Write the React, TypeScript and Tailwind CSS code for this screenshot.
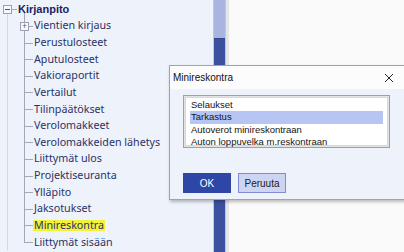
const children = [
  "Vientien kirjaus",
  "Perustulosteet",
  "Aputulosteet",
  "Vakioraportit",
  "Vertailut",
  "Tilinpäätökset",
  "Verolomakkeet",
  "Verolomakkeiden lähetys",
  "Liittymät ulos",
  "Projektiseuranta",
  "Ylläpito",
  "Jaksotukset",
  "Minireskontra",
  "Liittymät sisään",
];

const options = ["Selaukset", "Tarkastus", "Autoverot minireskontraan", "Auton loppuvelka m.reskontraan"];

function TreeRow({ label, index }: { label: string; index: number }) {
  const last = index === children.length - 1;
  const expandable = index === 0;
  const highlight = label === "Minireskontra";
  return (
    <div className="relative flex h-[16.64px] items-center pl-[33px]">
      <span className="absolute left-[7px] top-0 h-full w-px bg-[#d3d7e2]" />
      <span className={`absolute left-[24px] top-0 w-px bg-[#a4a8b4] ${last ? "h-1/2" : "h-full"}`} />
      <span className="absolute left-[24px] top-1/2 h-px w-[9px] bg-[#a4a8b4]" />
      {expandable && (
        <span className="absolute left-[20px] top-[4px] flex h-[9px] w-[9px] items-center justify-center border border-[#9ba1b3] bg-[#f7f8fc] text-[8px] leading-none text-[#4a5070]">
          +
        </span>
      )}
      <span className={`whitespace-nowrap pl-px pr-px leading-[11px] ${highlight ? "bg-[#f2f23a]" : ""}`}>{label}</span>
    </div>
  );
}

export default function App() {
  return (
    <div className="relative flex h-[252px] w-[404px] overflow-hidden bg-[#fafafa] font-['Noto_Sans',sans-serif]">
      {/* tree panel */}
      <div className="w-[213px] shrink-0 bg-[#eef2fb] pt-px text-[10.7px] text-[#2a3366]">
        <div className="relative flex h-[16.64px] items-center pl-[18px]">
          <span className="absolute left-[3px] top-[4px] flex h-[9px] w-[9px] items-center justify-center border border-[#9ba1b3] bg-[#f7f8fc]">
            <span className="h-px w-[5px] bg-[#4a5070]" />
          </span>
          <span className="absolute left-[12px] top-1/2 h-px w-[5px] bg-[#a4a8b4]" />
          <span className="absolute left-[7px] top-[13px] h-[4px] w-px bg-[#d3d7e2]" />
          <span className="absolute left-[24px] top-[12px] h-[5px] w-px bg-[#a4a8b4]" />
          <span className="font-['Liberation_Sans',sans-serif] text-[11px] font-bold text-[#1c2260]">Kirjanpito</span>
        </div>
        {children.map((c, i) => (
          <TreeRow key={c} label={c} index={i} />
        ))}
      </div>
      {/* scrollbar */}
      <div className="flex w-[13px] shrink-0 flex-col border-x border-[#c3c8d8] bg-[#a9b4e0]">
        <div className="h-[38px]" />
        <div className="flex-1 border-t border-[#34478f] bg-[#3c50a0]" />
      </div>
      <div className="w-[3px] shrink-0 bg-[#e4e5e8]" />
      <div className="flex-1 bg-[#fafafa]" />

      {/* dialog */}
      <div className="absolute left-[169px] top-[65px] flex h-[135px] w-[245px] flex-col border border-[#a3a3a3] bg-[#eef2fb] shadow-[1px_2px_3px_rgba(0,0,0,0.25)]">
        <div className="flex h-[23px] shrink-0 items-center justify-between bg-[#fcfcfc] pl-[3px] pr-[19px] font-['Liberation_Sans',sans-serif] text-[10px] text-[#111]">
          <span>Minireskontra</span>
          <svg width="10" height="10" viewBox="0 0 10 10" className="mt-px">
            <path d="M1 1L9 9M9 1L1 9" stroke="#222" strokeWidth="1" />
          </svg>
        </div>
        <div className="flex flex-1 flex-col pl-[13px] pt-[6px]">
          <div className="h-[53px] w-[207px] border border-[#a0a0a0] bg-[#e3e3e3] p-px">
            <div className="h-full border border-[#d8d8d8] bg-white px-[4px] py-[1px] font-['Liberation_Sans',sans-serif] text-[9.5px] text-[#141414]">
              {options.map((o) => (
                <div
                  key={o}
                  className={`flex h-[12.3px] items-center px-px ${o === "Tarkastus" ? "bg-[#b7c5f5]" : ""}`}
                >
                  {o}
                </div>
              ))}
            </div>
          </div>
          <div className="mt-[25px] flex gap-[7px] font-['Liberation_Sans',sans-serif] text-[10px]">
            <button className="flex h-[20px] w-[48px] items-center justify-center bg-[#2e47a7] text-white">OK</button>
            <button className="flex h-[20px] w-[48px] items-center justify-center border border-[#7f8cd3] bg-[#cdd5f2] text-[#222]">
              Peruuta
            </button>
          </div>
        </div>
      </div>
    </div>
  );
}
